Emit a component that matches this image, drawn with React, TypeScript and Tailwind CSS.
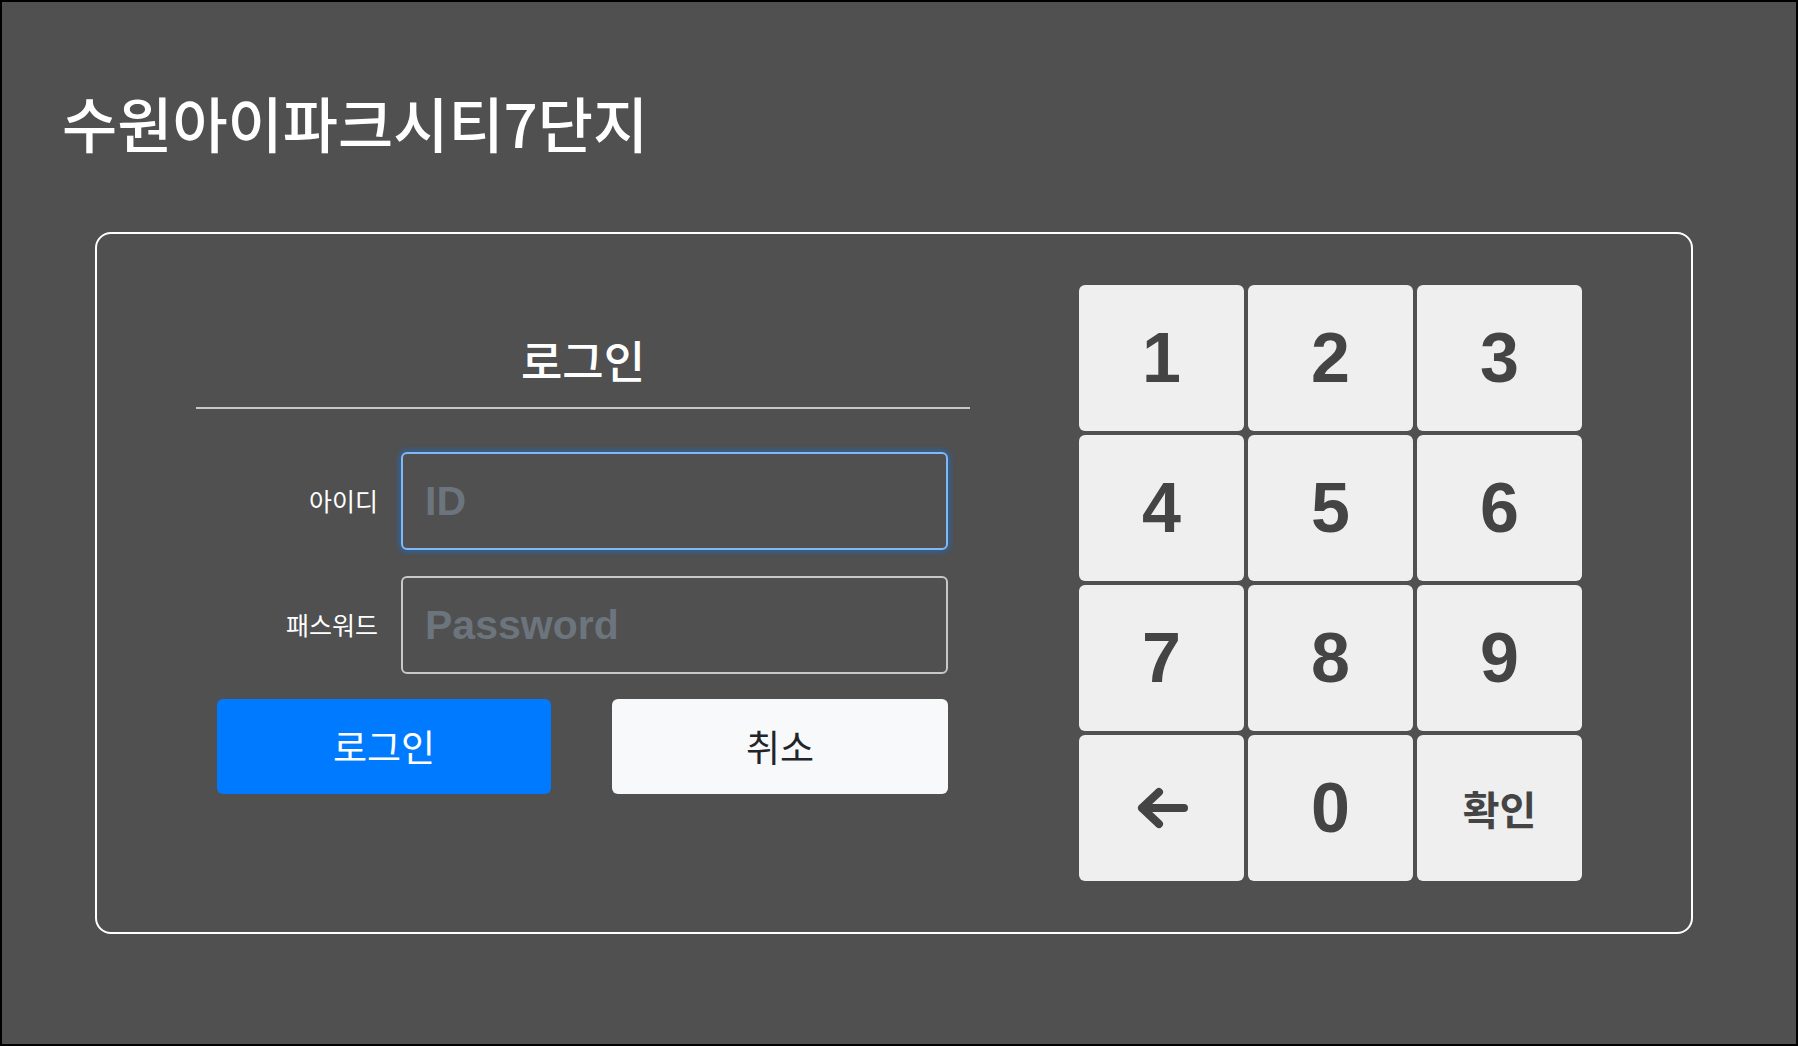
const keys = ["1", "2", "3", "4", "5", "6", "7", "8", "9"];

function BackArrow() {
  return (
    <svg width="56" height="48" viewBox="0 0 56 48" fill="none">
      <path
        d="M25 8 L8 24 L25 40 M8 24 H50"
        stroke="#444"
        strokeWidth="8"
        strokeLinecap="round"
        strokeLinejoin="round"
      />
    </svg>
  );
}

export default function App() {
  return (
    <div className="h-[1046px] w-full overflow-hidden border-2 border-black bg-[#505050] font-['Noto_Sans_CJK_KR',sans-serif] text-white">
      <h1 className="pl-[60px] pt-[85px] text-[60px] leading-[70px] font-medium">
        수원아이파크시티7단지
      </h1>

      <div className="mt-[75px] ml-[93px] flex h-[702px] w-[1598px] items-start rounded-[16px] border-2 border-white py-[51px]">
        {/* login form */}
        <div className="ml-[99px] w-[774px]">
          <h2 className="mt-[51px] border-b-2 border-[#c8c8c8] pb-[23px] text-center text-[45px] leading-[48px] font-medium">
            로그인
          </h2>

          <div className="mt-[43px] flex items-center">
            <label className="w-[182px] text-right text-[25px]">아이디</label>
            <input
              placeholder="ID"
              className="ml-[23px] h-[98px] w-[547px] rounded-[6px] border-2 border-[#80b9f5] bg-transparent px-[22px] font-['Liberation_Sans',Arial,sans-serif] text-[41px] font-bold text-white shadow-[0_0_5px_2px_rgba(0,123,255,0.45)] outline-none placeholder:text-[#6c757d]"
            />
          </div>

          <div className="mt-[26px] flex items-center">
            <label className="w-[182px] text-right text-[25px]">패스워드</label>
            <input
              type="password"
              placeholder="Password"
              className="ml-[23px] h-[98px] w-[547px] rounded-[6px] border-2 border-[#c8c8c8] bg-transparent px-[22px] font-['Liberation_Sans',Arial,sans-serif] text-[41px] font-bold text-white outline-none placeholder:text-[#6c757d]"
            />
          </div>

          <div className="mt-[25px] flex gap-[61px] pl-[21px]">
            <button className="h-[95px] w-[334px] rounded-[6px] bg-[#007bff] text-[37px] text-white">
              로그인
            </button>
            <button className="h-[95px] w-[336px] rounded-[6px] bg-[#f8f9fa] text-[37px] text-[#212529]">
              취소
            </button>
          </div>
        </div>

        {/* keypad */}
        <div className="ml-[109px] grid grid-cols-[repeat(3,165px)] grid-rows-[repeat(4,146px)] gap-[4px]">
          {keys.map((k) => (
            <button
              key={k}
              className="flex items-center justify-center rounded-[6px] bg-[#efefef] font-['Liberation_Sans',Arial,sans-serif] text-[70px] font-bold text-[#444]"
            >
              {k}
            </button>
          ))}
          <button className="flex items-center justify-center rounded-[6px] bg-[#efefef]">
            <BackArrow />
          </button>
          <button className="flex items-center justify-center rounded-[6px] bg-[#efefef] font-['Liberation_Sans',Arial,sans-serif] text-[70px] font-bold text-[#444]">
            0
          </button>
          <button className="flex items-center justify-center rounded-[6px] bg-[#efefef] text-[40px] font-bold text-[#444]">
            확인
          </button>
        </div>
      </div>
    </div>
  );
}
